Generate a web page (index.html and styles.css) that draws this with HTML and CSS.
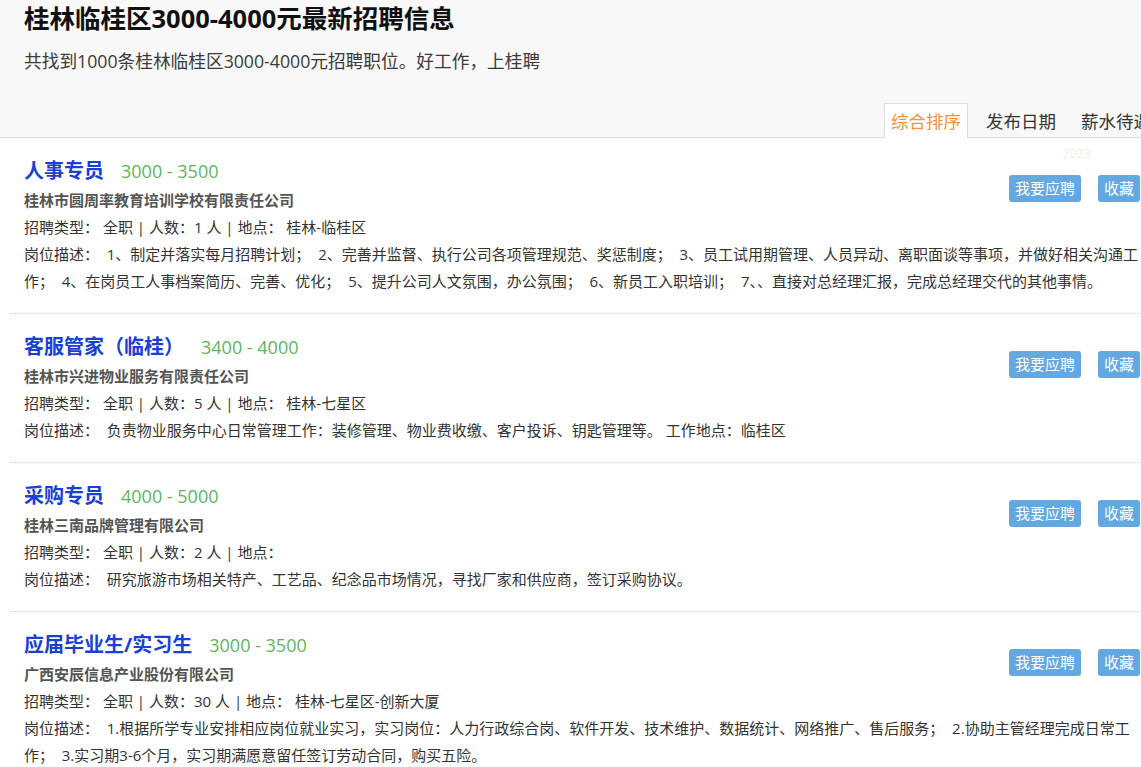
FILE: index.html
```html
<!DOCTYPE html>
<html lang="zh-CN">
<head>
<meta charset="utf-8">
<title>桂林临桂区3000-4000元最新招聘信息</title>
<link rel="stylesheet" href="styles.css">
</head>
<body>
<div class="page">
  <header class="header">
    <h1 class="title">桂林临桂区3000-4000元最新招聘信息</h1>
    <p class="sub">共找到1000条桂林临桂区3000-4000元招聘职位。好工作，上桂聘</p>
    <nav class="tabs">
      <a class="tab active">综合排序</a>
      <a class="tab">发布日期</a>
      <a class="tab">薪水待遇</a>
    </nav>
  </header>

  <ul class="jobs">
    <li class="job">
      <span class="date">2023</span>
      <div class="job-head">
        <div class="job-main">
          <div class="job-title"><a class="name">人事专员</a><span class="salary">3000 - 3500</span></div>
          <div class="company">桂林市圆周率教育培训学校有限责任公司</div>
        </div>
        <div class="actions"><a class="btn">我要应聘</a><a class="btn">收藏</a></div>
      </div>
      <div class="meta">招聘类型： 全职 | 人数：1 人 | 地点： 桂林-临桂区</div>
      <div class="desc">岗位描述：&nbsp; 1、制定并落实每月招聘计划；&nbsp; 2、完善并监督、执行公司各项管理规范、奖惩制度；&nbsp; 3、员工试用期管理、人员异动、离职面谈等事项，并做好相关沟通工作；&nbsp; 4、在岗员工人事档案简历、完善、优化；&nbsp; 5、提升公司人文氛围，办公氛围；&nbsp; 6、新员工入职培训；&nbsp; 7、、直接对总经理汇报，完成总经理交代的其他事情。</div>
    </li>
    <li class="job">
      <div class="job-head">
        <div class="job-main">
          <div class="job-title"><a class="name">客服管家（临桂）</a><span class="salary">3400 - 4000</span></div>
          <div class="company">桂林市兴进物业服务有限责任公司</div>
        </div>
        <div class="actions"><a class="btn">我要应聘</a><a class="btn">收藏</a></div>
      </div>
      <div class="meta">招聘类型： 全职 | 人数：5 人 | 地点： 桂林-七星区</div>
      <div class="desc">岗位描述：&nbsp; 负责物业服务中心日常管理工作：装修管理、物业费收缴、客户投诉、钥匙管理等。 工作地点：临桂区</div>
    </li>
    <li class="job">
      <div class="job-head">
        <div class="job-main">
          <div class="job-title"><a class="name">采购专员</a><span class="salary">4000 - 5000</span></div>
          <div class="company">桂林三南品牌管理有限公司</div>
        </div>
        <div class="actions"><a class="btn">我要应聘</a><a class="btn">收藏</a></div>
      </div>
      <div class="meta">招聘类型： 全职 | 人数：2 人 | 地点：</div>
      <div class="desc">岗位描述：&nbsp; 研究旅游市场相关特产、工艺品、纪念品市场情况，寻找厂家和供应商，签订采购协议。</div>
    </li>
    <li class="job">
      <div class="job-head">
        <div class="job-main">
          <div class="job-title"><a class="name">应届毕业生/实习生</a><span class="salary">3000 - 3500</span></div>
          <div class="company">广西安辰信息产业股份有限公司</div>
        </div>
        <div class="actions"><a class="btn">我要应聘</a><a class="btn">收藏</a></div>
      </div>
      <div class="meta">招聘类型： 全职 | 人数：30 人 | 地点： 桂林-七星区-创新大厦</div>
      <div class="desc">岗位描述：&nbsp; 1.根据所学专业安排相应岗位就业实习，实习岗位：人力行政综合岗、软件开发、技术维护、数据统计、网络推广、售后服务；&nbsp; 2.协助主管经理完成日常工作；&nbsp; 3.实习期3-6个月，实习期满愿意留任签订劳动合同，购买五险。</div>
    </li>
  </ul>
</div>
</body>
</html>
```

FILE: styles.css
```css
html {
  overflow: hidden;
}

body {
  margin: 0;
  background: #fff;
  font-family: "Open Sans", "Noto Sans CJK SC", sans-serif;
  color: #333;
}

.page {
  width: 1158px;
}

.header {
  background: #f8f8f8;
  border-bottom: 1px solid #ddd;
  padding: 0 0 0 24px;
}

.title {
  margin: 0;
  font-size: 25.5px;
  line-height: 36px;
  font-weight: 700;
  color: #111;
}

.sub {
  margin: 13px 0 0;
  font-size: 17.7px;
  line-height: 24px;
  color: #3a3a3a;
}

.tabs {
  display: flex;
  justify-content: flex-end;
  gap: 11px;
  margin-top: 30px;
  margin-bottom: -1px;
}

.tab {
  display: block;
  padding: 0 6px;
  height: 34px;
  line-height: 34px;
  font-size: 17.5px;
  color: #333;
  border: 1px solid transparent;
  border-bottom: none;
  box-sizing: border-box;
}

.tab.active {
  background: #fff;
  border-color: #ddd;
  color: #f0913e;
  height: 35px;
}

.jobs {
  list-style: none;
  margin: 0 0 0 10px;
  padding: 0;
}

.job {
  position: relative;
  padding: 18px 18px 18px 14px;
  border-bottom: 1px dotted #cfcfcf;
}

.date {
  position: absolute;
  top: 8px;
  left: 1053px;
  font-size: 12px;
  line-height: 16px;
  color: #f4ede1;
}

.job-head {
  display: flex;
  justify-content: space-between;
  align-items: center;
}

.job-title {
  display: flex;
  align-items: baseline;
  gap: 17px;
  line-height: 29px;
}

.name {
  font-size: 20px;
  font-weight: 700;
  color: #1a3fd6;
}

.salary {
  font-size: 18px;
  color: #5cb660;
}

.company {
  font-size: 15px;
  line-height: 28px;
  font-weight: 700;
  color: #555;
}

.actions {
  display: flex;
  gap: 17px;
  margin-top: 6px;
}

.btn {
  display: block;
  height: 27px;
  line-height: 27px;
  padding: 0 6px;
  font-size: 15px;
  color: #fff;
  background: #64a8e2;
  border-radius: 3px;
}

.meta,
.desc {
  font-size: 15px;
  line-height: 27px;
  color: #333;
}
```
